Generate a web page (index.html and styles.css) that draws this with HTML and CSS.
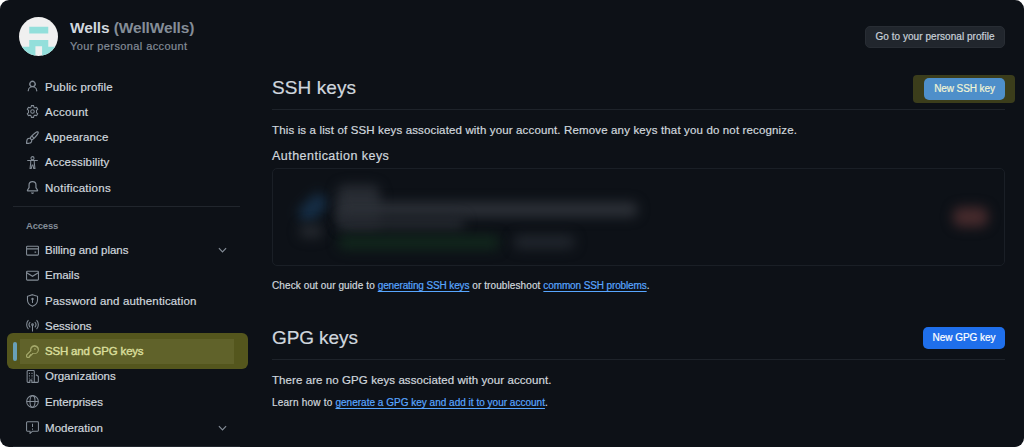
FILE: index.html
```html
<!DOCTYPE html>
<html lang="en">
<head>
<meta charset="utf-8">
<title>SSH and GPG keys</title>
<link rel="stylesheet" href="styles.css">
</head>
<body>
<div class="app">
  <header class="header">
    <svg class="avatar" viewBox="0 0 38 38"><defs><clipPath id="round"><circle cx="19" cy="19" r="19"/></clipPath></defs><g clip-path="url(#round)"><path fill="#f0f0f0" d="M0 0h38v38H0z"/><path fill="#93dfdb" d="M10 9.500h18.500v6.500H10zM10 22.500h18.500v6.500H38v6h-6.500V38h-9v-9.500h-6.500V38h-9v-3H0v-6h10z"/></g></svg>
    <div class="who">
      <div class="name">Wells <span class="login">(WellWells)</span></div>
      <div class="sub">Your personal account</div>
    </div>
    <button class="btn btn-dark">Go to your personal profile</button>
  </header>
  <div class="body">
    <nav class="nav">
      <a class="item"><svg class="icon" viewBox="0 0 16 16"><path d="M10.561 8.073a6 6 0 0 1 3.432 5.142.75.75 0 1 1-1.498.07 4.500 4.500 0 0 0-8.990 0 .75.75 0 0 1-1.498-.07 6 6 0 0 1 3.431-5.142 3.999 3.999 0 1 1 5.123 0ZM10.500 5a2.500 2.500 0 1 0-5 0 2.500 2.500 0 0 0 5 0Z"/></svg>Public profile</a>
      <a class="item wide"><svg class="icon line" viewBox="0 0 16 16"><path d="M6.700.8h2.600l.5 2 1.200.7 2-.6 1.400 2.300-1.500 1.500v2.600l1.500 1.500-1.400 2.300-2-.6-1.200.7-.5 2H6.700l-.5-2-1.200-.7-2 .6-1.400-2.300 1.500-1.500V6.700L1.600 5.200 3 2.900l2 .6 1.200-.7z"/><circle cx="8" cy="8" r="2.200"/></svg>Account</a>
      <a class="item"><svg class="icon" viewBox="0 0 16 16"><path d="M11.134 1.535c.7-.509 1.416-.942 2.076-1.155.649-.21 1.463-.267 2.069.34.603.601.568 1.411.368 2.070-.202.668-.624 1.390-1.125 2.096-1.011 1.424-2.496 2.987-3.775 4.249-1.098 1.084-2.132 1.839-3.040 2.300a3.744 3.744 0 0 1-1.055 3.217c-.431.431-1.065.691-1.657.861-.614.177-1.294.287-1.914.357A21.151 21.151 0 0 1 .797 16H.743l.007-.75H.749L.742 16a.75.75 0 0 1-.743-.742l.743-.008-.742.007v-.054a21.250 21.250 0 0 1 .13-2.284c.067-.647.187-1.287.358-1.914.17-.591.430-1.226.860-1.657a3.746 3.746 0 0 1 3.227-1.054c.466-.893 1.225-1.907 2.314-2.982 1.271-1.255 2.833-2.750 4.245-3.777ZM1.620 13.089c-.051.464-.086.929-.104 1.395.466-.018.932-.053 1.396-.104a10.511 10.511 0 0 0 1.668-.309c.526-.151.856-.325 1.011-.480a2.250 2.250 0 1 0-3.182-3.182c-.155.155-.329.485-.480 1.011a10.515 10.515 0 0 0-.309 1.669Zm10.396-10.340c-1.224.890-2.605 2.189-3.822 3.384l1.718 1.718c1.210-1.205 2.510-2.597 3.387-3.833.470-.662.780-1.227.912-1.662.134-.444.032-.551.009-.575h-.001V1.780c-.014-.014-.113-.113-.548.027-.432.140-.995.462-1.655.942Zm-4.832 7.266-.001.001a9.859 9.859 0 0 0 1.630-1.142L7.155 7.216a9.700 9.700 0 0 0-1.161 1.607c.482.302.889.710 1.190 1.192Z"/></svg>Appearance</a>
      <a class="item"><svg class="icon line" viewBox="0 0 16 16"><circle cx="8" cy="2.700" r="1.900"/><path d="M1.500 5.500h13M5.800 5.500v3L5 15.200h1.500L7.500 11h1l1 4.200H11l-.8-6.700v-3"/></svg>Accessibility</a>
      <a class="item wide"><svg class="icon" viewBox="0 0 16 16"><path d="M8 16a2 2 0 0 0 1.985-1.750c.017-.137-.097-.250-.235-.250h-3.500c-.138 0-.252.113-.235.250A2 2 0 0 0 8 16ZM3 5a5 5 0 0 1 10 0v2.947c0 .050.015.098.042.139l1.703 2.555A1.519 1.519 0 0 1 13.482 13H2.518a1.516 1.516 0 0 1-1.263-2.360l1.703-2.554A.255.255 0 0 0 3 7.947Zm5-3.500A3.500 3.500 0 0 0 4.500 5v2.947c0 .346-.102.683-.294.970l-1.703 2.556a.017.017 0 0 0-.003.010l.001.006.004.006.006.004.007.001h10.964l.007-.001.006-.004.004-.006.001-.007a.017.017 0 0 0-.003-.010l-1.703-2.554a1.745 1.745 0 0 1-.294-.970V5A3.500 3.500 0 0 0 8 1.500Z"/></svg>Notifications</a>
      <div class="rule"></div>
      <div class="group">Access</div>
      <a class="item tight"><svg class="icon line" viewBox="0 0 16 16"><rect x=".7" y="2.700" width="14.600" height="11" rx="1"/><path d="M.7 6h14.600M10.500 10h2"/></svg>Billing and plans<svg class="chev" viewBox="0 0 10 6"><path d="m1 1 4 4 4-4"/></svg></a>
      <a class="item tight"><svg class="icon line" viewBox="0 0 16 16"><rect x=".7" y="2.700" width="14.600" height="11" rx="1"/><path d="m.9 4.600 7.100 4.400 7.100-4.400"/></svg>Emails</a>
      <a class="item"><svg class="icon line" viewBox="0 0 16 16"><path d="M8 .8 14.200 2.900v4.300c0 3.800-2.300 6.600-6.200 8-3.900-1.400-6.200-4.200-6.200-8V2.900zM8 7.200v3.800"/><circle cx="8" cy="6.200" r=".8"/></svg>Password and authentication</a>
      <a class="item tight"><svg class="icon line" viewBox="0 0 16 16"><path d="M3 1.500a8 8 0 0 0 0 11M13 1.500a8 8 0 0 1 0 11M5.200 3.700a4.800 4.800 0 0 0 0 6.600M10.800 3.700a4.800 4.800 0 0 1 0 6.600M8 8v7.500"/><circle cx="8" cy="7" r="1"/></svg>Sessions</a>
      <a class="item current"><svg class="icon" viewBox="0 0 16 16"><path d="M10.500 0a5.499 5.499 0 1 1-1.288 10.848l-.932.932a.749.749 0 0 1-.530.220H7v.750a.749.749 0 0 1-.220.530l-.500.500a.749.749 0 0 1-.530.220H5v.750a.749.749 0 0 1-.220.530l-.500.500a.749.749 0 0 1-.530.220h-2A1.750 1.750 0 0 1 0 14.250v-2c0-.199.079-.389.220-.530l4.932-4.932A5.500 5.500 0 0 1 10.500 0Zm-4 5.500c-.001.431.069.860.205 1.269a.750.750 0 0 1-.181.768L1.500 12.560v1.690c0 .138.112.250.250.250h1.690l.060-.060v-1.190a.750.750 0 0 1 .750-.750h.750v-.750a.750.750 0 0 1 .750-.750h1.190l1.023-1.025a.750.750 0 0 1 .768-.180A4 4 0 1 0 6.500 5.500ZM11 6a1 1 0 1 1 0-2 1 1 0 0 1 0 2Z"/></svg>SSH and GPG keys</a>
      <a class="item tight"><svg class="icon line" viewBox="0 0 16 16"><path d="M10.200 15.200V1.700a1 1 0 0 0-1-1H2.400a1 1 0 0 0-1 1v12.500a1 1 0 0 0 1 1h2.300v-3h2.500v3h7a1 1 0 0 0 1-1V8.300a1 1 0 0 0-.5-.9l-2.500-1.600"/><path stroke-dasharray="1.400 1.600" d="M4.200 3.500v7M7.400 3.500v7"/></svg>Organizations</a>
      <a class="item tight"><svg class="icon line" viewBox="0 0 16 16"><circle cx="8" cy="8" r="7.200"/><ellipse cx="8" cy="8" rx="3.100" ry="7.200"/><path d="M1 8h14"/></svg>Enterprises</a>
      <a class="item last"><svg class="icon line" viewBox="0 0 16 16"><path d="M1.700 1h12.600a1 1 0 0 1 1 1v9.500a1 1 0 0 1-1 1H8l-3 2.800v-2.800H1.700a1 1 0 0 1-1-1V2a1 1 0 0 1 1-1zM8 3.500v4M8 9.200v1.500"/></svg>Moderation<svg class="chev" viewBox="0 0 10 6"><path d="m1 1 4 4 4-4"/></svg></a>
      <div class="rule end"></div>
    </nav>
    <main class="main">
      <section>
        <div class="head"><h2>SSH keys</h2><span class="mark"><button class="btn btn-blue">New SSH key</button></span></div>
        <p class="text intro">This is a list of SSH keys associated with your account. Remove any keys that you do not recognize.</p>
        <h3>Authentication keys</h3>
        <div class="keybox">
          <i class="blob b-key"></i><i class="blob b-tag"></i><i class="blob b-title"></i><i class="blob b-hash"></i><i class="blob b-date"></i><i class="blob b-used"></i><i class="blob b-perm"></i><i class="blob b-del"></i>
        </div>
        <p class="note guide"><span class="lead">Check out our guide to </span><a class="narrow">generating SSH keys</a><span class="lead"> or troubleshoot </span><a class="narrow">common SSH problems</a>.</p>
      </section>
      <section class="gpg">
        <div class="head"><h2 class="gpg-title">GPG keys</h2><button class="btn btn-blue">New GPG key</button></div>
        <p class="text none">There are no GPG keys associated with your account.</p>
        <p class="note learn"><span class="lead">Learn how to </span><a>generate a GPG key and add it to your account</a>.</p>
      </section>
    </main>
  </div>
</div>
</body>
</html>
```
FILE: styles.css
```css
* { box-sizing: border-box; margin: 0; padding: 0; }
body { background: #fff; font-family: "Liberation Sans", Arial, sans-serif; color: #d0d7de; overflow: hidden; -webkit-text-stroke: .2px; }
.app { width: 1024px; height: 447px; background: #0d1117; border-radius: 9px; overflow: hidden; }
.header { height: 74px; display: flex; align-items: flex-start; padding: 17px 19px 0 19px; }
.avatar { width: 39px; height: 39px; display: block; }
.who { margin-left: 12px; flex: 1; padding-top: 2px; white-space: nowrap; }
.name { font-size: 15.5px; line-height: 18px; font-weight: bold; letter-spacing: -.14px; -webkit-text-stroke: 0; }
.login { color: #848d97; }
.sub { font-size: 11px; line-height: 14px; margin-top: 2px; letter-spacing: .4px; color: #848d97; }
.btn { display: block; font: 500 10px/20px "Liberation Sans", Arial, sans-serif; border: 1px solid transparent; border-radius: 5px; white-space: nowrap; height: 22px; text-align: center; -webkit-text-stroke: .2px; }
.btn-dark { width: 140px; margin-top: 9px; background: #21262d; border-color: #282d34; color: #c9d1d9; letter-spacing: .05px; }
.btn-blue { width: 82px; background: #1f6feb; color: #fff; letter-spacing: -.05px; }
.body { display: flex; }
.nav { width: 248px; flex: none; }
.item { position: relative; display: flex; align-items: center; height: 25.25px; padding-left: 26px; font-size: 11.5px; letter-spacing: .14px; white-space: nowrap; }
.tight { letter-spacing: -.02px; }
.wide { letter-spacing: .25px; }
.icon { width: 13px; height: 13px; margin-right: 6px; fill: #848d97; flex: none; }
.line { fill: none; stroke: #848d97; stroke-width: 1.3; }
.chev { width: 9px; height: 6px; margin-left: auto; margin-right: 21px; fill: none; stroke: #848d97; stroke-width: 1.3; }
.rule { height: 1px; background: #21262d; margin: 6px 8px 0 13px; }
.rule.end { margin-top: 5px; }
.group { font-size: 9.5px; font-weight: bold; color: #848d97; line-height: 12px; letter-spacing: -.2px; margin: 12.500px 0 5.750px 26px; -webkit-text-stroke: 0; }
.item.last { margin-top: 1px; letter-spacing: .05px; }
.current { color: #dadf9c; z-index: 0; -webkit-text-stroke: .4px; letter-spacing: -.2px; }
.current .icon { fill: #a5a96b; stroke: none; }
.current::before { content: ""; position: absolute; z-index: -1; left: 7px; right: 0; top: -6px; height: 36px; border-radius: 6px; background: linear-gradient(#60622a, #60622a) 13px 6px / 214px 25px no-repeat #54561d; }
.current::after { content: ""; position: absolute; left: 13px; top: 3px; width: 4px; height: 19px; border-radius: 3px; background: #68a0b7; }
.main { width: 733px; margin-left: 24px; }
.head { height: 36px; display: flex; justify-content: space-between; align-items: flex-start; border-bottom: 1px solid #1e232a; }
h2 { font-size: 19px; font-weight: normal; line-height: 28px; letter-spacing: .1px; }
.gpg-title { letter-spacing: -.1px; }
.mark { background: #3b3d1b; border-radius: 4px; padding: 3px 10px 3px 11px; margin: 1px -10px 0 0; height: 28px; }
.mark .btn { background: #4e8fca; color: #f0f4d5; width: 81px; letter-spacing: -.1px; }
.text { font-size: 11.5px; line-height: 14px; white-space: nowrap; letter-spacing: .145px; }
.intro { margin-top: 13px; }
h3 { font-size: 12.5px; font-weight: normal; line-height: 16px; margin-top: 11px; letter-spacing: .47px; }
.keybox { position: relative; margin-top: 4px; height: 98px; border: 1px solid #1a1f26; border-radius: 5px; }
.blob { position: absolute; filter: blur(6px); border-radius: 8px; }
.b-key { left: 24px; top: 30px; width: 32px; height: 18px; background: #152d45; transform: rotate(-45deg); }
.b-tag { left: 26px; top: 56px; width: 24px; height: 13px; background: #24282e; }
.b-title { left: 64px; top: 16px; width: 43px; height: 43px; background: #282c33; }
.b-hash { left: 66px; top: 33px; width: 299px; height: 15px; background: #2c3037; }
.b-date { left: 66px; top: 47px; width: 126px; height: 14px; background: #23272e; }
.b-used { left: 65px; top: 66px; width: 162px; height: 15px; background: #11261c; }
.b-perm { left: 240px; top: 66px; width: 62px; height: 14px; background: #20252c; }
.b-del { left: 680px; top: 38px; width: 35px; height: 20px; background: #452a2c; }
.note { font-size: 10px; line-height: 13px; white-space: nowrap; letter-spacing: .02px; }
.note a { color: #58a6ff; text-decoration: underline; text-underline-offset: 2px; text-decoration-thickness: 1px; }
.lead { letter-spacing: .1px; }
.note .narrow { letter-spacing: -.12px; }
.guide { margin-top: 13px; }
.gpg { padding-top: 32px; }
.gpg .btn { margin-top: 3px; }
.none { margin-top: 13px; letter-spacing: .08px; }
.learn { margin-top: 9px; letter-spacing: .01px; }
.learn .lead { letter-spacing: .22px; }
```
